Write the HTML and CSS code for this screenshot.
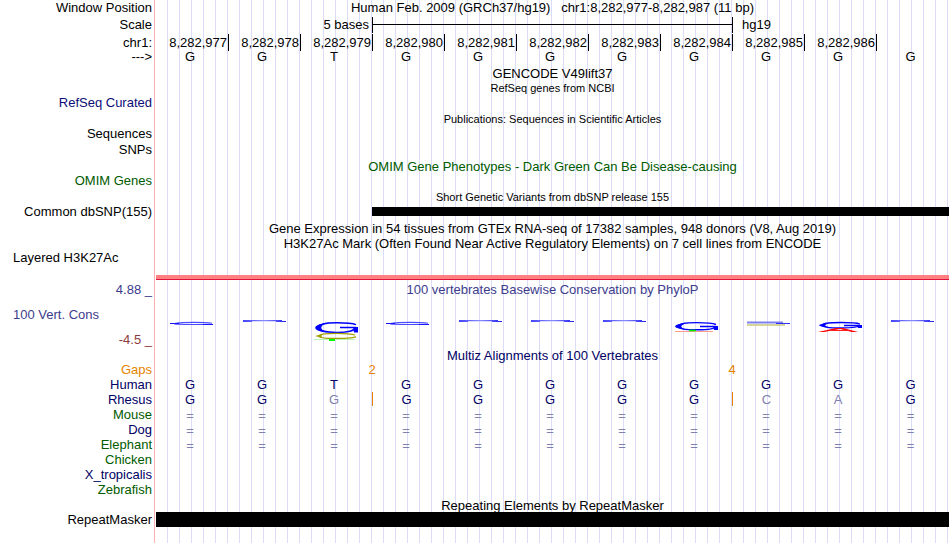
FILE: index.html
```
<!DOCTYPE html>
<html lang="en">
<head>
<meta charset="utf-8">
<title>Human chr1:8,282,977-8,282,987</title>
<link rel="stylesheet" href="styles.css">
</head>
<body>
<main class="browser">
  <div class="row tall"><div class="label">Window Position</div><div class="title spaced">Human Feb. 2009 (GRCh37/hg19)   chr1:8,282,977-8,282,987 (11 bp)</div></div>
  <div class="row scale-row"><div class="label">Scale</div>
    <div class="cells"><span class="scale-size">5 bases</span><span class="scale-bar"></span><span class="scale-db">hg19</span></div></div>
  <div class="row ruler"><div class="label">chr1:</div>
    <div class="cells"><span>8,282,977</span><span>8,282,978</span><span>8,282,979</span><span>8,282,980</span><span>8,282,981</span><span>8,282,982</span><span>8,282,983</span><span>8,282,984</span><span>8,282,985</span><span>8,282,986</span><span></span></div></div>
  <div class="row"><div class="label">---&gt;</div>
    <div class="cells bases"><span>G</span><span>G</span><span>T</span><span>G</span><span>G</span><span>G</span><span>G</span><span>G</span><span>G</span><span>G</span><span>G</span></div></div>

  <div class="row spread"><div class="label"></div><div class="title">GENCODE V49lift37</div></div>
  <div class="row short"><div class="label"></div><div class="title small">RefSeq genes from NCBI</div></div>
  <div class="row"><div class="label blue">RefSeq Curated</div></div>

  <div class="row short spread"><div class="label"></div><div class="title small">Publications: Sequences in Scientific Articles</div></div>
  <div class="row tall"><div class="label">Sequences</div></div>
  <div class="row"><div class="label">SNPs</div></div>

  <div class="row short spread green"><div class="label"></div><div class="title">OMIM Gene Phenotypes - Dark Green Can Be Disease-causing</div></div>
  <div class="row green"><div class="label">OMIM Genes</div></div>

  <div class="row short spread"><div class="label"></div><div class="title small">Short Genetic Variants from dbSNP release 155</div></div>
  <div class="row"><div class="label">Common dbSNP(155)</div><div class="cells"><span class="variant"></span></div></div>

  <div class="row spread"><div class="label"></div><div class="title">Gene Expression in 54 tissues from GTEx RNA-seq of 17382 samples, 948 donors (V8, Aug 2019)</div></div>
  <div class="row short"><div class="label"></div><div class="title">H3K27Ac Mark (Often Found Near Active Regulatory Elements) on 7 cell lines from ENCODE</div></div>
  <div class="row signal-row"><div class="label left">Layered H3K27Ac</div><div class="signal"></div></div>

  <div class="row spread cons-row">
    <div class="label cons-label"><span class="violet">4.88 _</span><span class="violet left">100 Vert. Cons</span><span class="maroon">-4.5 _</span></div>
    <div class="cons">
      <div class="title violet">100 vertebrates Basewise Conservation by PhyloP</div>
      <svg class="logo" viewBox="0 0 793 30" preserveAspectRatio="none" aria-hidden="true">
        <defs>
          <linearGradient id="fade"><stop offset="0" stop-color="#4444ff"/><stop offset="0.5" stop-color="#8c8cff"/><stop offset="1" stop-color="#2020f0"/></linearGradient>
          <g id="thin"><path d="M15 4H54V5H58V6H48V5.3H24V6H15Z" fill="url(#fade)"/></g>
          <g id="flat" fill="none" stroke="#4a4aff"><path d="M56 7.2C50 6.4 46 6.4 38 6.4S25 6.5 20 7.4S25 8.5 38 8.5H50" stroke-width="1.1"/><path d="M14 7.5H23M47 8.5H57" stroke="#1515ff" stroke-width="1.2"/></g>
        </defs>
        <use href="#flat"/><use href="#thin" x="72"/>
        <g fill="none">
          <path d="M200 8.6C196 7 190 6.7 181 6.7C169 6.7 162 8.8 162 11.5S169 16.4 181 16.4C191 16.4 199 14.6 199 11.5H184" stroke="#0000ff" stroke-width="1.5"/>
          <path d="M172 7C155 8 155 15.4 172 16.4C163 14.5 163 9 172 7Z" fill="#0000ff"/>
          <path d="M197 11H202V16.5H198Z" fill="#0000ff"/>
          <path d="M199 19C194 17.3 188 17.3 181 17.3C169 17.3 163 18.3 163 20S169 22.5 181 22.5S195 22.2 200 20.8" stroke="#a0a000" stroke-width="1.3"/>
          <path d="M159 20L168 17.4Q163 20 168 22.4Z" fill="#a0a000"/>
          <path d="M158 23.5H173M180 23.5H199" stroke="#b8f5b8"/><path d="M173 24H179" stroke="#00ff00" stroke-width="2"/>
        </g>
        <use href="#flat" x="216"/><use href="#thin" x="288"/><use href="#thin" x="360"/><use href="#thin" x="432"/>
        <g fill="none">
          <path d="M560 8.5C556 6.8 550 6.6 541 6.6C529 6.6 522 8 522 10.2S529 13.8 541 13.8C551 13.8 559 12.8 559 10.5H544" stroke="#0000ff" stroke-width="1.4"/>
          <path d="M532 7C515 8 515 12.8 532 13.6C523 12 523 9 532 7Z" fill="#0000ff"/>
          <path d="M557 10H562V14H558Z" fill="#0000ff"/>
          <path d="M519 15.5H557" stroke="#ff9b91"/><path d="M533 14.5H540" stroke="#00ee00" stroke-width="1.6"/>
        </g>
        <path d="M591 6.5H627" stroke="#8080f0" stroke-width="2"/><path d="M620 7.5H634" stroke="#3030f0"/><path d="M591 9H629" stroke="#c8c878" stroke-width="1.6"/>
        <g fill="none">
          <path d="M704 8C700 6.6 694 6.5 685 6.5C673 6.5 666 7.5 666 9.2S673 11.9 685 11.9C695 11.9 703 11.2 703 9.5H688" stroke="#0000ff" stroke-width="1.3"/>
          <path d="M676 6.8C659 8 659 10.8 676 11.7C667 10.6 667 8.2 676 6.8Z" fill="#0000ff"/>
          <path d="M701 9H706V12H702Z" fill="#0000ff"/>
          <path d="M662 15.9L680 12H687L702 15.9H696L684 12.9L668 15.9Z" fill="#ff0000"/><path d="M675 14.5H693" stroke="#ff2020"/>
        </g>
        <use href="#thin" x="720"/>
      </svg>
    </div>
  </div>

  <div class="row short align-title"><div class="label"></div><div class="title navy">Multiz Alignments of 100 Vertebrates</div></div>
  <div class="row orange"><div class="label">Gaps</div><div class="cells gaps"><span class="gap-a">2</span><span class="gap-b">4</span></div></div>
  <div class="row navy"><div class="label">Human</div>
    <div class="cells bases"><span>G</span><span>G</span><span>T</span><span>G</span><span>G</span><span>G</span><span>G</span><span>G</span><span>G</span><span>G</span><span>G</span></div></div>
  <div class="row navy"><div class="label">Rhesus</div>
    <div class="cells bases"><span>G</span><span>G</span><span class="differs">G</span><span class="insert">G</span><span>G</span><span>G</span><span>G</span><span>G</span><span class="differs insert">C</span><span class="differs">A</span><span>G</span></div></div>
  <div class="row green"><div class="label">Mouse</div>
    <div class="cells bases unaligned"><span>=</span><span>=</span><span>=</span><span>=</span><span>=</span><span>=</span><span>=</span><span>=</span><span>=</span><span>=</span><span>=</span></div></div>
  <div class="row navy"><div class="label">Dog</div>
    <div class="cells bases unaligned"><span>=</span><span>=</span><span>=</span><span>=</span><span>=</span><span>=</span><span>=</span><span>=</span><span>=</span><span>=</span><span>=</span></div></div>
  <div class="row green"><div class="label">Elephant</div>
    <div class="cells bases unaligned"><span>=</span><span>=</span><span>=</span><span>=</span><span>=</span><span>=</span><span>=</span><span>=</span><span>=</span><span>=</span><span>=</span></div></div>
  <div class="row green"><div class="label">Chicken</div></div>
  <div class="row navy"><div class="label">X_tropicalis</div></div>
  <div class="row green"><div class="label">Zebrafish</div></div>

  <div class="row short align-title"><div class="label"></div><div class="title">Repeating Elements by RepeatMasker</div></div>
  <div class="row"><div class="label">RepeatMasker</div><div class="repeat"></div></div>
</main>
</body>
</html>
```
FILE: styles.css
```
* {
  box-sizing: border-box;
}

body {
  margin: 0;
  background: #fff;
  color: #000;
  font: 13px/15px "Liberation Sans", Arial, sans-serif;
}

/* Guide lines repeat every 12px, right of the label column and its pink edge. */
.browser {
  min-height: 100vh;
  padding-right: 1px;
  background:
    linear-gradient(#ffb0b0, #ffb0b0) 154px 0 / 1px 100% no-repeat,
    repeating-linear-gradient(90deg, transparent 0 11px, #dcdcf8 11px 12px) 156px 0 no-repeat;
}

.row {
  display: grid;
  grid-template-columns: 154px 1fr;
  column-gap: 2px;
  height: 15px;
}

.short { height: 14px; }
.tall { height: 16px; }
.scale-row { height: 18px; }
.spread { margin-top: 2px; }
.align-title { margin-top: 1px; }

.label {
  padding-right: 2px;
  text-align: right;
  white-space: nowrap;
}

.left {
  padding-left: 13px;
  text-align: left;
}

.title {
  text-align: center;
  white-space: nowrap;
}

.spaced { white-space: pre; }

.small {
  font-size: 11px;
  line-height: 14px;
}

.blue { color: #0c0c78; }
.navy { color: #000064; }
.green { color: #005a00; }
.violet { color: #3c3c8c; }
.maroon { color: #8c3c3c; }
.orange { color: #e68200; }

/* One column per base; the last one takes the spare width. */
.cells {
  display: grid;
  grid-template-columns: repeat(10, 72fr) 73fr;
}

.scale-row {
  line-height: 18px;
}

.scale-size {
  grid-column: 1 / span 3;
  padding-right: 3px;
  text-align: right;
}

.scale-bar {
  grid-column: 4 / span 5;
  height: 16px;
  margin: 1px -1px 0 0;
  border: solid #000;
  border-width: 0 1px;
  background: linear-gradient(#000, #000) 0 7px / 100% 1px no-repeat;
}

.scale-db {
  grid-column: 9 / span 2;
  padding-left: 10px;
}

.ruler {
  line-height: 17px;
}

.ruler span {
  padding-right: 1px;
  text-align: right;
}

.ruler span + span {
  border-left: 1px solid #000;
}

.bases span {
  padding-right: 4px;
  text-align: center;
}

.differs { color: #8080b0; }

.unaligned {
  color: #8080b0;
  line-height: 17px;
}

.bases .insert {
  height: 14px;
  border-left: 1px solid #e68200;
}

.gaps { text-align: center; }
.gap-a { grid-column: 3 / span 2; }
.gap-b { grid-column: 8 / span 2; }

.variant {
  grid-column: 4 / -1;
  height: 9px;
  margin-top: 3px;
  background: #000;
}

.signal-row { height: 30px; }

.signal {
  align-self: end;
  height: 5px;
  background: #ff8080;
  border-bottom: 1px solid #dc143c;
}

.cons-row { height: 65px; }

.cons-label {
  display: flex;
  flex-direction: column;
  justify-content: space-between;
}

.cons {
  display: flex;
  flex-direction: column;
  gap: 19px;
}

.logo {
  display: block;
  width: 100%;
  height: 30px;
}

.repeat { background: #000; }
```
